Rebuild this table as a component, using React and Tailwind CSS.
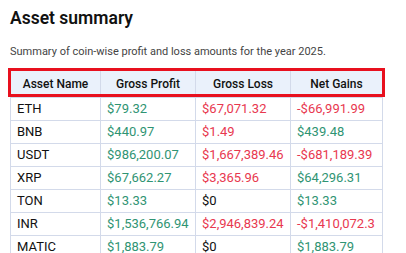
const rows = [
  { asset: "ETH", profit: "$79.32", loss: "$67,071.32", net: "-$66,991.99" },
  { asset: "BNB", profit: "$440.97", loss: "$1.49", net: "$439.48" },
  { asset: "USDT", profit: "$986,200.07", loss: "$1,667,389.46", net: "-$681,189.39" },
  { asset: "XRP", profit: "$67,662.27", loss: "$3,365.96", net: "$64,296.31" },
  { asset: "TON", profit: "$13.33", loss: "$0", net: "$13.33" },
  { asset: "INR", profit: "$1,536,766.94", loss: "$2,946,839.24", net: "-$1,410,072.3" },
  { asset: "MATIC", profit: "$1,883.79", loss: "$0", net: "$1,883.79" },
];

const green = "text-[#2f9473]";
const red = "text-[#e8384f]";

function amountClass(value, kind) {
  if (value === "$0") return "text-[#111]";
  if (kind === "loss") return red;
  if (kind === "net") return value.startsWith("-") ? red : green;
  return green;
}

export default function App() {
  return (
    <div className="w-[406px] h-[253px] overflow-hidden bg-white px-[10px] pt-[7px] font-['Roboto',sans-serif]">
      <h1 className="text-[17.5px] leading-[22px] font-semibold text-[#111]">Asset summary</h1>
      <p className="mt-[15px] text-[11px] leading-[16px] text-[#444]">
        Summary of coin-wise profit and loss amounts for the year 2025.
      </p>
      <div className="relative mt-[9px] w-[373px]">
        <div className="pointer-events-none absolute left-[-2px] top-[-1px] h-[29px] w-[377px] border-[3px] border-[#e8101e]" />
        <table className="w-full border-collapse text-[13px] leading-[16px]">
          <colgroup>
            <col className="w-[91px]" />
            <col className="w-[95px]" />
            <col className="w-[95px]" />
            <col className="w-[92px]" />
          </colgroup>
          <thead>
            <tr className="bg-[#eaf1fb]">
              {["Asset Name", "Gross Profit", "Gross Loss", "Net Gains"].map((h) => (
                <th key={h} className="h-[28px] border border-[#d3daea] px-[6px] text-center text-[12px] font-medium text-[#111]">
                  {h}
                </th>
              ))}
            </tr>
          </thead>
          <tbody>
            {rows.map((r) => (
              <tr key={r.asset}>
                <td className="h-[23px] border border-[#d3daea] px-[6px] text-[#111]">{r.asset}</td>
                <td className={`border border-[#d3daea] px-[6px] whitespace-nowrap ${amountClass(r.profit, "profit")}`}>{r.profit}</td>
                <td className={`border border-[#d3daea] px-[6px] whitespace-nowrap ${amountClass(r.loss, "loss")}`}>{r.loss}</td>
                <td className={`border border-[#d3daea] px-[6px] whitespace-nowrap ${amountClass(r.net, "net")}`}>{r.net}</td>
              </tr>
            ))}
          </tbody>
        </table>
      </div>
    </div>
  );
}
